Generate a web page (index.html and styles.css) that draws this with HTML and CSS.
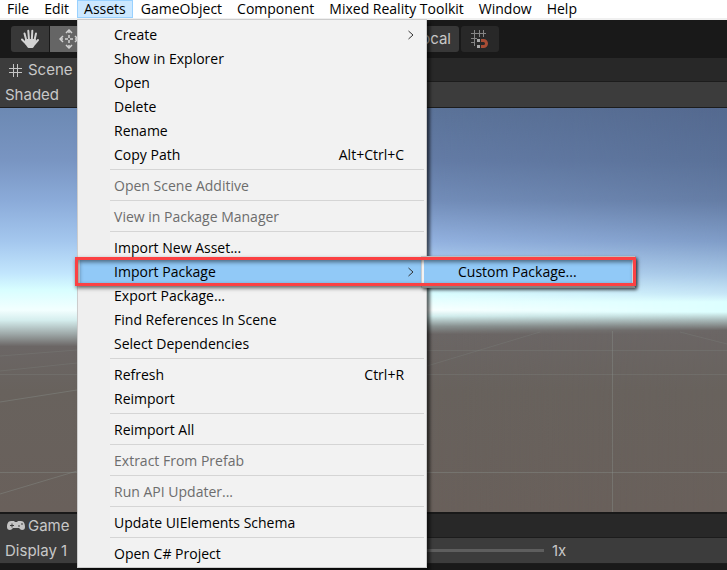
FILE: index.html
```html
<!DOCTYPE html>
<html lang="en">
<head>
<meta charset="utf-8">
<title>Editor</title>
<link rel="stylesheet" href="styles.css">
</head>
<body>
<nav class="menubar">
  <button>File</button>
  <button>Edit</button>
  <div class="menu-root">
    <button class="open">Assets</button>
    <ul class="menu">
      <li><button>Create<svg class="chevron" viewBox="0 0 6 10"><path d="M.5 1 5 5 .5 9"/></svg></button></li>
      <li><button>Show in Explorer</button></li>
      <li><button>Open</button></li>
      <li><button>Delete</button></li>
      <li><button>Rename</button></li>
      <li><button>Copy Path<span>Alt+Ctrl+C</span></button></li>
      <li class="separator"></li>
      <li><button disabled>Open Scene Additive</button></li>
      <li class="separator"></li>
      <li><button disabled>View in Package Manager</button></li>
      <li class="separator"></li>
      <li><button>Import New Asset...</button></li>
      <li class="expanded">
        <button class="selected">Import Package<svg class="chevron" viewBox="0 0 6 10"><path d="M.5 1 5 5 .5 9"/></svg></button>
        <ul class="submenu"><li><button class="selected">Custom Package...</button></li></ul>
        <div class="callout"></div>
      </li>
      <li><button>Export Package...</button></li>
      <li><button>Find References In Scene</button></li>
      <li><button>Select Dependencies</button></li>
      <li class="separator"></li>
      <li><button>Refresh<span>Ctrl+R</span></button></li>
      <li><button>Reimport</button></li>
      <li class="separator"></li>
      <li><button>Reimport All</button></li>
      <li class="separator"></li>
      <li><button disabled>Extract From Prefab</button></li>
      <li class="separator"></li>
      <li><button disabled>Run API Updater...</button></li>
      <li class="separator"></li>
      <li><button>Update UIElements Schema</button></li>
      <li class="separator"></li>
      <li><button>Open C# Project</button></li>
    </ul>
  </div>
  <button>GameObject</button>
  <button>Component</button>
  <button>Mixed Reality Toolkit</button>
  <button>Window</button>
  <button>Help</button>
</nav>

<header class="toolbar">
  <div class="tools">
    <button aria-label="Hand tool">
      <svg width="20" height="20" viewBox="0 0 20 20" fill="none" stroke="#d2d2d2" stroke-width="2" stroke-linecap="round">
        <path d="M6.5 12 4.5 4.500M9 11 8.300 1.800M11.800 11 12.300 1.800M14.300 12 16 4.500M6 14.500 2 10.500M15 14.500 18 11"/>
        <path fill="#d2d2d2" stroke-linejoin="round" d="M6 11h9l-.5 4-2 3H8.500L6 14.500Z"/>
      </svg>
    </button>
    <button class="active" aria-label="Move tool">
      <svg width="20" height="20" viewBox="0 0 20 20" fill="none" stroke="#d2d2d2" stroke-width="1.500">
        <path stroke-dasharray="3 2" d="M10 1v18M1 10h18"/>
        <path d="M7 4l3-3 3 3M7 16l3 3 3-3M4 7l-3 3 3 3M16 7l3 3-3 3"/>
      </svg>
    </button>
  </div>
  <div class="handles">
    <button class="local">Local</button>
    <button class="snap" aria-label="Grid snapping">
      <svg width="18" height="18" viewBox="0 0 18 18" fill="none">
        <path stroke="#858585" d="M0 3.500h15M0 8.500h6M0 12.500h4M3.500 0v16M8.500 0v7M12.500 0v7"/>
        <path stroke="#aaa" stroke-width="3" d="M6 10.500h3M6 16.500h3"/>
        <path stroke="#a84d35" stroke-width="3" d="M10 10.500h2.500a3 3 0 0 1 0 6H10"/>
      </svg>
    </button>
  </div>
</header>

<section class="panel scene-panel">
  <div class="tabs"><button>
    <svg width="13" height="13" viewBox="0 0 13 13" fill="none" stroke="#c4c4c4"><path d="M0 4.500h13M0 8.500h13M4.500 0v13M8.500 0v13"/></svg>Scene
  </button></div>
  <div class="options"><select aria-label="Draw mode"><option>Shaded</option></select></div>
  <svg class="viewport" viewBox="0 0 727 404" preserveAspectRatio="none" aria-hidden="true">
    <defs>
      <linearGradient id="left" x1="0" y1="0" x2="0" y2="1">
        <stop offset="0" stop-color="#6c89b3"/><stop offset=".13" stop-color="#7995c2"/>
        <stop offset=".23" stop-color="#8babd9"/><stop offset=".33" stop-color="#a4c7ee"/>
        <stop offset=".41" stop-color="#c2e6fd"/><stop offset=".45" stop-color="#d8feff"/>
        <stop offset=".5" stop-color="#f3ffff"/><stop offset=".525" stop-color="#d5eeee"/>
        <stop offset=".56" stop-color="#9da7a7"/><stop offset=".59" stop-color="#6b6665"/>
        <stop offset=".7" stop-color="#68625d"/><stop offset="1" stop-color="#69605b"/>
      </linearGradient>
      <linearGradient id="middle" x1="0" y1="0" x2="0" y2="1">
        <stop offset="0" stop-color="#5b7399"/><stop offset=".13" stop-color="#647ca6"/>
        <stop offset=".23" stop-color="#738eba"/><stop offset=".33" stop-color="#93b2e0"/>
        <stop offset=".41" stop-color="#b9dbf8"/><stop offset=".46" stop-color="#dafeff"/>
        <stop offset=".5" stop-color="#faffff"/><stop offset=".515" stop-color="#d3eeee"/>
        <stop offset=".54" stop-color="#8a9392"/><stop offset=".56" stop-color="#6b6665"/>
        <stop offset=".7" stop-color="#68625d"/><stop offset="1" stop-color="#69605b"/>
      </linearGradient>
      <linearGradient id="right" x1="0" y1="0" x2="0" y2="1">
        <stop offset="0" stop-color="#54698f"/><stop offset=".13" stop-color="#5a7198"/>
        <stop offset=".23" stop-color="#657da5"/><stop offset=".33" stop-color="#809dc8"/>
        <stop offset=".41" stop-color="#a6c6e5"/><stop offset=".46" stop-color="#c7e6f7"/>
        <stop offset=".48" stop-color="#dcffff"/><stop offset=".505" stop-color="#dcffff"/>
        <stop offset=".525" stop-color="#a7b8b8"/><stop offset=".55" stop-color="#6b6665"/>
        <stop offset=".7" stop-color="#68625d"/><stop offset="1" stop-color="#69605b"/>
      </linearGradient>
      <linearGradient id="fade-middle"><stop offset=".1" stop-color="#000"/><stop offset=".58" stop-color="#fff"/></linearGradient>
      <linearGradient id="fade-right"><stop offset=".58" stop-color="#000"/><stop offset="1" stop-color="#fff"/></linearGradient>
      <mask id="mask-middle"><rect width="727" height="404" fill="url(#fade-middle)"/></mask>
      <mask id="mask-right"><rect width="727" height="404" fill="url(#fade-right)"/></mask>
    </defs>
    <rect width="727" height="404" fill="url(#left)"/>
    <rect width="727" height="404" fill="url(#middle)" mask="url(#mask-middle)"/>
    <rect width="727" height="404" fill="url(#right)" mask="url(#mask-right)"/>
    <g fill="none" stroke="#89908d" stroke-opacity=".4">
      <path d="M0 364.500h727M612.500 223v181M0 294 77 282M0 386 77 363"/>
      <path stroke-opacity=".22" d="M0 263 77 255M0 248 77 242M0 266.500h727M420 242.500h307M427 258 540 224M680 224 727 236"/>
    </g>
  </svg>
</section>

<section class="panel game-panel">
  <div class="tabs"><button>
    <svg width="18" height="10" viewBox="0 0 18 10"><path fill="#c4c4c4" d="M4 0h3l1 1h2l1-1h3c3 0 4 3 4 6 0 2-1 3-3 3-1 0-2-1-3-2H6C5 8 4 9 3 9 1 9 0 8 0 6c0-3 1-6 4-6Z"/><path stroke="#3c3c3c" d="M3 4.500h4M5 2.500v4M11 5h2M14 3h2"/></svg>Game
  </button></div>
  <div class="options">
    <select aria-label="Display"><option>Display 1</option></select>
    <label class="scale"><input type="range" min="1" max="5" value="1" step="1" aria-label="Scale">1x</label>
  </div>
</section>
</body>
</html>
```
FILE: styles.css
```css
* { box-sizing: border-box; }
body {
  margin: 0;
  min-height: 100vh;
  display: flex;
  flex-direction: column;
  overflow: hidden;
  background: #191919;
  color: #c8c8c8;
  font: 15px/24px Inter, sans-serif;
}
button, select {
  border: 0;
  margin: 0;
  padding: 0;
  background: none;
  color: inherit;
  font: inherit;
}
ul { list-style: none; margin: 0; }

.menubar {
  display: flex;
  gap: 1px;
  height: 20px;
  background: #fff;
  border-bottom: 2px solid #f0f0f0;
  color: #000;
  font: 14px/18px "Open Sans", sans-serif;
}
.menubar > button, .open { height: 18px; padding: 0 7px; white-space: nowrap; }
.menu-root { position: relative; }
.open { background: #cce8ff; box-shadow: inset 0 0 0 1px #99d1ff; }

.menu {
  position: absolute;
  z-index: 2;
  top: 19px;
  left: 0;
  width: 350px;
  padding: 3px 2px 1px;
  border: 1px solid #ccc;
  background: linear-gradient(90deg, #efefef 32px, #f2f2f2 32px);
  box-shadow: 3px 3px 3px rgba(0, 0, 0, .6);
}
.menu button {
  display: flex;
  align-items: center;
  width: 100%;
  height: 24px;
  padding: 0 20px 0 34px;
  text-align: left;
  white-space: nowrap;
}
.menu span { margin-left: auto; }
.menu button:disabled { color: #6d6d6d; }
.menu .selected { background: #91c9f7; }
.separator { height: 7px; padding: 2px 0 0 30px; }
.separator::before { content: ""; display: block; height: 1px; background: #d5d5d5; }
.chevron {
  width: 6px;
  height: 10px;
  margin: 0 -10px 0 auto;
  fill: none;
  stroke: #333;
}
.expanded { position: relative; }
.submenu {
  position: absolute;
  top: -4px;
  left: 341px;
  width: 214px;
  padding: 3px 2px;
  border: 1px solid #ccc;
  background: #f2f2f2;
  box-shadow: 2px 2px 3px rgba(0, 0, 0, .5);
}
.callout {
  position: absolute;
  inset: -3px -212px -2px -5px;
  border: 3px solid #fb4143;
  box-shadow: 1px 2px 4px rgba(0, 0, 0, .6), inset 1px 2px 4px rgba(0, 0, 0, .5);
  pointer-events: none;
}

.toolbar { display: flex; height: 38px; padding: 6px 11px; }
.tools, .handles { display: flex; gap: 1px; }
.toolbar button {
  display: flex;
  align-items: center;
  justify-content: center;
  width: 38px;
  height: 26px;
  background: #383838;
}
.tools button:first-child { border-radius: 3px 0 0 3px; }
.toolbar .active { background: #656565; }
.handles { margin-left: 312px; gap: 2px; }
.toolbar .local { width: 59px; padding-right: 8px; justify-content: flex-end; border-radius: 0 3px 3px 0; }
.toolbar .snap { background: #282828; border-radius: 3px; }

.panel { display: flex; flex-direction: column; }
.scene-panel { flex: 1; }
.tabs { height: 24px; background: #282828; border-bottom: 1px solid #1c1c1c; }
.tabs button {
  display: flex;
  align-items: center;
  width: 90px;
  height: 24px;
  padding-left: 9px;
  gap: 6px;
  background: #3c3c3c;
}
.options {
  display: flex;
  align-items: center;
  height: 26px;
  padding: 0 5px;
  background: #3c3c3c;
  border-bottom: 1px solid #1c1c1c;
}
.options select { appearance: none; width: 90px; }
.viewport { flex: 1; width: 100%; min-height: 0; display: block; }
.game-panel { border-top: 2px solid #191919; padding-bottom: 6px; }
.game-panel .tabs button { padding-left: 7px; gap: 3px; }
.scale { display: flex; align-items: center; gap: 8px; margin-left: 249px; }
.scale input { appearance: none; width: 200px; height: 3px; margin: 0; background: #5e5e5e; }
.scale input::-webkit-slider-thumb {
  appearance: none;
  width: 10px;
  height: 10px;
  border-radius: 50%;
  background: #999;
}
```
